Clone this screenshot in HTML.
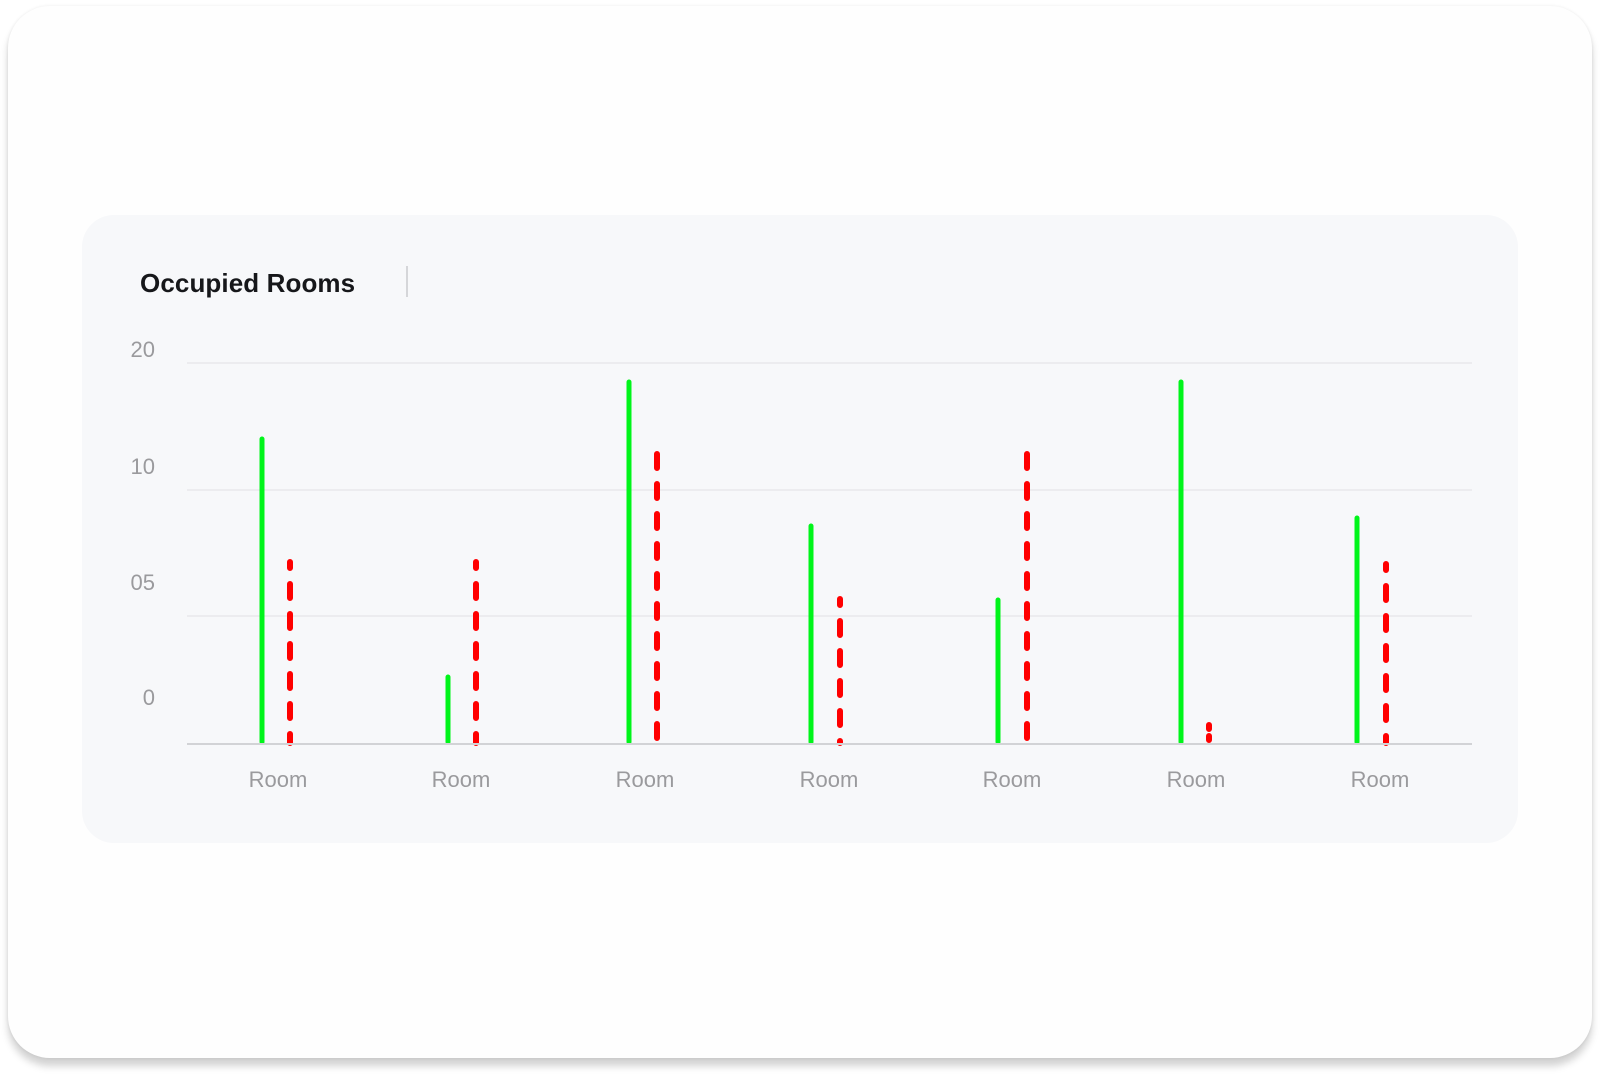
<!DOCTYPE html>
<html><head><meta charset="utf-8"><style>
html,body{margin:0;padding:0;width:1600px;height:1074px;background:#fff;overflow:hidden;font-family:"Liberation Sans",sans-serif}
.outer{position:absolute;left:8px;top:6px;width:1584px;height:1052px;background:#fefefe;border-radius:42px;box-shadow:0 8px 8px rgba(0,0,0,.18),0 0 3px rgba(0,0,0,.08)}
.inner{position:absolute;left:82px;top:215px;width:1436px;height:628px;background:#f7f8fa;border-radius:32px}
.title{position:absolute;left:140px;top:268px;font-size:26px;font-weight:bold;color:#16171a;letter-spacing:0.1px}
.div{position:absolute;left:406px;top:266px;width:2px;height:31px;background:#d5d6d9}
.yl{position:absolute;width:60px;text-align:right;left:95px;font-size:22px;color:#9a9a9d}
.xl{position:absolute;width:120px;text-align:center;font-size:22px;color:#9a9a9d;top:767px}
svg{position:absolute;left:0;top:0}
</style></head><body>
<div class="outer"></div>
<div class="inner"></div>
<div class="title">Occupied Rooms</div>
<div class="div"></div>
<div class="yl" style="top:337px">20</div>
<div class="yl" style="top:454px">10</div>
<div class="yl" style="top:570px">05</div>
<div class="yl" style="top:685px">0</div>
<svg width="1600" height="1074">
<g stroke="#ececef" stroke-width="2">
<line x1="187" y1="363" x2="1472" y2="363"/>
<line x1="187" y1="490" x2="1472" y2="490"/>
<line x1="187" y1="616" x2="1472" y2="616"/>
</g>
<g stroke="#00f51a" stroke-width="5" stroke-linecap="round">
<line x1="262" y1="439" x2="262" y2="742"/>
<line x1="448" y1="677" x2="448" y2="742"/>
<line x1="629" y1="382" x2="629" y2="742"/>
<line x1="811" y1="526" x2="811" y2="742"/>
<line x1="998" y1="600" x2="998" y2="742"/>
<line x1="1181" y1="382" x2="1181" y2="742"/>
<line x1="1357" y1="518" x2="1357" y2="742"/>
</g>
<g stroke="#ff0000" stroke-width="6" stroke-linecap="round" stroke-dasharray="14 16">
<line x1="290" y1="562" x2="290" y2="743" stroke-dashoffset="8"/>
<line x1="476" y1="562" x2="476" y2="743" stroke-dashoffset="8"/>
<line x1="657" y1="454" x2="657" y2="743"/>
<line x1="840" y1="599" x2="840" y2="743" stroke-dashoffset="8"/>
<line x1="1027" y1="454" x2="1027" y2="743"/>
<line x1="1209" y1="725" x2="1209" y2="743" stroke-dasharray="4 7"/>
<line x1="1386" y1="564" x2="1386" y2="743" stroke-dashoffset="8"/>
</g>
<line x1="187" y1="744" x2="1472" y2="744" stroke="#d2d3d6" stroke-width="2"/>
</svg>
<div class="xl" style="left:218px">Room</div>
<div class="xl" style="left:401px">Room</div>
<div class="xl" style="left:585px">Room</div>
<div class="xl" style="left:769px">Room</div>
<div class="xl" style="left:952px">Room</div>
<div class="xl" style="left:1136px">Room</div>
<div class="xl" style="left:1320px">Room</div>
</body></html>
